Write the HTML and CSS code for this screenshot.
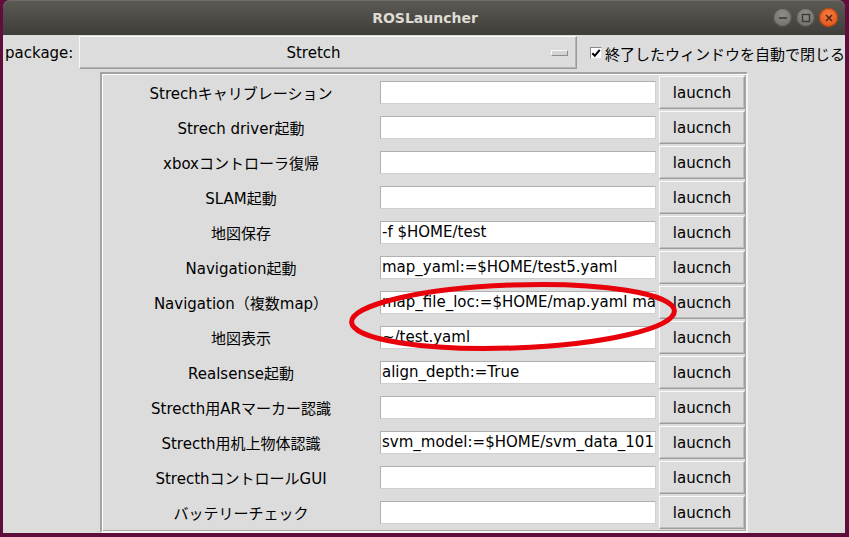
FILE: index.html
```html
<!DOCTYPE html>
<html lang="ja">
<head>
<meta charset="utf-8">
<title>ROSLauncher</title>
<link rel="stylesheet" href="styles.css">
</head>
<body>
<div class="window">
  <div class="titlebar">
    <span class="title">ROSLauncher</span>
    <div class="controls">
      <span class="wbtn wmin"><svg width="10" height="10" viewBox="0 0 10 10"><rect x="1" y="4.2" width="8" height="1.6" fill="#3b3b38"/></svg></span>
      <span class="wbtn wmax"><svg width="10" height="10" viewBox="0 0 10 10"><rect x="1.5" y="1.5" width="7" height="7" fill="none" stroke="#3b3b38" stroke-width="1.4"/></svg></span>
      <span class="wbtn wclose"><svg width="10" height="10" viewBox="0 0 10 10"><path d="M2 2L8 8M8 2L2 8" stroke="#4a2410" stroke-width="1.5"/></svg></span>
    </div>
  </div>
  <div class="content">
    <div class="toprow">
      <span class="pkg-label">package:</span>
      <div class="optionmenu"><span class="om-text">Stretch</span><span class="om-ind"></span></div>
      <div class="check"><span class="cbox"><svg width="10" height="10" viewBox="0 0 10 10"><path d="M1.3 5.2L3.8 7.8L8.7 1.8" fill="none" stroke="#000" stroke-width="2"/></svg></span><span class="check-text">終了したウィンドウを自動で閉じる</span></div>
    </div>
    <div class="frame">
      <div class="row"><span class="label">Strechキャリブレーション</span><div class="entry"></div><div class="btn">laucnch</div></div>
      <div class="row"><span class="label">Strech driver起動</span><div class="entry"></div><div class="btn">laucnch</div></div>
      <div class="row"><span class="label">xboxコントローラ復帰</span><div class="entry"></div><div class="btn">laucnch</div></div>
      <div class="row"><span class="label">SLAM起動</span><div class="entry"></div><div class="btn">laucnch</div></div>
      <div class="row"><span class="label">地図保存</span><div class="entry">-f $HOME/test</div><div class="btn">laucnch</div></div>
      <div class="row"><span class="label">Navigation起動</span><div class="entry">map_yaml:=$HOME/test5.yaml</div><div class="btn">laucnch</div></div>
      <div class="row"><span class="label">Navigation（複数map）</span><div class="entry">map_file_loc:=$HOME/map.yaml map_file_loc2:=$HOME/map2.yaml</div><div class="btn">laucnch</div></div>
      <div class="row"><span class="label">地図表示</span><div class="entry">~/test.yaml</div><div class="btn">laucnch</div></div>
      <div class="row"><span class="label">Realsense起動</span><div class="entry">align_depth:=True</div><div class="btn">laucnch</div></div>
      <div class="row"><span class="label">Strecth用ARマーカー認識</span><div class="entry"></div><div class="btn">laucnch</div></div>
      <div class="row"><span class="label">Strecth用机上物体認識</span><div class="entry">svm_model:=$HOME/svm_data_1015.pkl</div><div class="btn">laucnch</div></div>
      <div class="row"><span class="label">StrecthコントロールGUI</span><div class="entry"></div><div class="btn">laucnch</div></div>
      <div class="row"><span class="label">バッテリーチェック</span><div class="entry"></div><div class="btn">laucnch</div></div>
    </div>
  </div>
</div>
<svg class="annotation" width="849" height="537" viewBox="0 0 849 537">
  <ellipse cx="513" cy="316.5" rx="161.5" ry="31.5" transform="rotate(-2 513 316.5)" fill="none" stroke="#e8000b" stroke-width="5"/>
</svg>
</body>
</html>
```
FILE: styles.css
```css
* { box-sizing: border-box; }
html, body { margin: 0; padding: 0; }
body {
  width: 849px;
  height: 537px;
  overflow: hidden;
  background: #5f0e3c;
  position: relative;
  font-family: "DejaVu Sans", "Noto Sans CJK JP", sans-serif;
  font-size: 15px;
  color: #000;
}
.window {
  margin: 0 4px 0 3px;
  height: 533px;
  display: flex;
  flex-direction: column;
  overflow: hidden;
}
.titlebar {
  height: 35px;
  flex: none;
  border-radius: 7px 7px 0 0;
  background: linear-gradient(#5b5a55, #3e3d39);
  box-shadow: inset 0 1px 0 #6e6d67;
  position: relative;
  display: flex;
  align-items: center;
  justify-content: center;
}
.title {
  color: #dfdbd2;
  font-family: "DejaVu Sans", sans-serif;
  font-weight: bold;
  font-size: 14px;
  margin-left: 2px;
}
.controls {
  position: absolute;
  right: 7px;
  top: 8px;
  display: flex;
  gap: 4px;
}
.wbtn {
  width: 19px;
  height: 19px;
  border-radius: 50%;
  display: flex;
  align-items: center;
  justify-content: center;
  background: radial-gradient(circle at 50% 35%, #8e8d87, #6a6964);
  box-shadow: inset 0 0 0 1px #4c4b47;
}
.wclose {
  background: radial-gradient(circle at 50% 35%, #f47a3e, #dd4e16);
  box-shadow: inset 0 0 0 1px #a9400f;
}
.content {
  flex: 1;
  background: #dcdcdc;
  display: flex;
  flex-direction: column;
  overflow: hidden;
}
.toprow {
  height: 35px;
  flex: none;
  display: flex;
  align-items: flex-end;
  padding-bottom: 1px;
}
.pkg-label {
  width: 76px;
  padding-left: 2px;
  align-self: center;
  margin-top: 2px;
}
.optionmenu {
  width: 498px;
  height: 33px;
  display: flex;
  align-items: center;
  border: 1px solid;
  border-color: #f8f8f8 #9a9a9a #9a9a9a #f8f8f8;
  box-shadow: inset -1px -1px 0 #b4b4b4;
}
.om-text {
  flex: 1;
  text-align: center;
  padding-left: 2px;
  margin-top: 1px;
}
.om-ind {
  width: 17px;
  height: 6px;
  margin: 0 8px 0 6px;
  border: 1px solid;
  border-color: #f8f8f8 #8e8e8e #8e8e8e #f8f8f8;
  background: #d4d4d4;
}
.check {
  display: flex;
  align-items: center;
  margin-left: 13px;
  align-self: center;
  margin-top: 2px;
}
.cbox {
  width: 12px;
  height: 12px;
  background: #fff;
  border: 1px solid;
  border-color: #8a8a8a #e0e0e0 #e0e0e0 #8a8a8a;
  display: flex;
  align-items: center;
  justify-content: center;
  margin-right: 3px;
}
.check-text { white-space: nowrap; }
.frame {
  margin: 2px 0 0 97px;
  width: 648px;
  flex: none;
  border: 2px solid;
  border-color: #a3a3a3 #f4f4f4 #f4f4f4 #a3a3a3;
  box-shadow: inset 1px 1px 0 #fff, inset -1px -1px 0 #a8a8a8;
  padding: 1px 1px 1px 0;
  display: flex;
  flex-direction: column;
}
.row {
  height: 35px;
  display: grid;
  grid-template-columns: 275px 276px 86px;
  column-gap: 3px;
  align-items: center;
}
.label {
  text-align: center;
  white-space: nowrap;
  padding-left: 3px;
}
.entry {
  height: 23px;
  background: #fff;
  border: 1px solid;
  border-color: #b0b0b0 #d0d0d0 #d0d0d0 #b0b0b0;
  padding: 0 0 0 1px;
  line-height: 21px;
  white-space: nowrap;
  overflow: hidden;
}
.btn {
  height: 33px;
  display: flex;
  align-items: center;
  justify-content: center;
  border: 1px solid;
  border-color: #fafafa #9c9c9c #9c9c9c #fafafa;
  box-shadow: inset -1px -1px 0 #bdbdbd;
  background: #dcdcdc;
}
.annotation {
  position: absolute;
  left: 0;
  top: 0;
  pointer-events: none;
}
```
